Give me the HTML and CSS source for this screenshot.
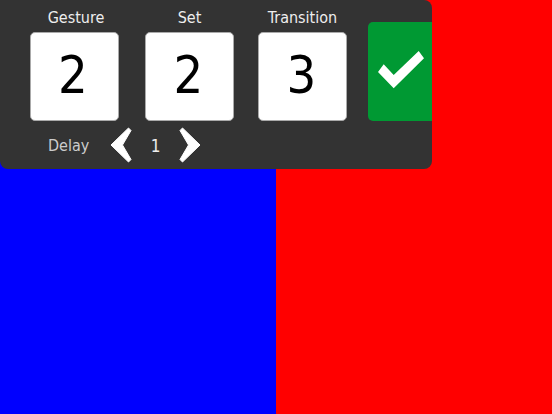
FILE: index.html
```html
<!DOCTYPE html>
<html lang="en">
<head>
<meta charset="utf-8">
<title>Gesture</title>
<link rel="stylesheet" href="styles.css">
</head>
<body>
<div class="stage">
  <div class="half blue"></div>
  <div class="half red"></div>
  <section class="panel">
    <div class="top">
      <div class="fields">
        <div class="field gesture"><span class="label">Gesture</span><div class="box">2</div></div>
        <div class="field set"><span class="label">Set</span><div class="box">2</div></div>
        <div class="field"><span class="label">Transition</span><div class="box">3</div></div>
      </div>
      <button class="ok" aria-label="Confirm">
        <svg width="46" height="38" viewBox="0 0 46 38"><path d="M0 21 L5.7 13.3 L15.7 24 L40.7 0 L46 7.3 L15.7 37.3 Z" fill="#fff"/></svg>
      </button>
    </div>
    <div class="delay">
      <span class="delay-label">Delay</span>
      <svg class="chev" width="22" height="36" viewBox="0 0 22 36"><path d="M18.5 1 L21 3.5 L12.5 18 L21 32.5 L18.5 35 L1 18 Z" fill="#fff" stroke="#fff" stroke-width="1" stroke-linejoin="round"/></svg>
      <span class="delay-value">1</span>
      <svg class="chev" width="22" height="36" viewBox="0 0 22 36"><path d="M3.5 1 L1 3.5 L9.5 18 L1 32.5 L3.5 35 L21 18 Z" fill="#fff" stroke="#fff" stroke-width="1" stroke-linejoin="round"/></svg>
    </div>
  </section>
</div>
</body>
</html>
```
FILE: styles.css
```css
html, body { margin: 0; padding: 0; }
body { font-family: "DejaVu Sans", "Noto Sans", sans-serif; font-stretch: condensed; }
.stage { position: relative; width: 552px; height: 414px; display: grid; grid-template-columns: 276px 276px; overflow: hidden; }
.blue { background: #0000ff; }
.red { background: #ff0000; }
.panel { position: absolute; top: 0; left: 0; width: 432px; height: 169px; background: #333333; border-radius: 0 8px 8px 8px; display: flex; flex-direction: column; }
.top { display: flex; align-items: flex-end; height: 121px; }
.fields { display: flex; padding-left: 30px; width: 338px; box-sizing: border-box; }
.field { display: flex; flex-direction: column; align-items: center; width: 89px; }
.gesture { margin-right: 26px; }
.gesture .label { padding-left: 3px; }
.set { margin-right: 24px; }
.label { color: #eeeeee; font-size: 16px; line-height: 20px; height: 24px; white-space: nowrap; margin-top: 8px; }
.box { width: 89px; height: 89px; box-sizing: border-box; padding-right: 2px; background: #fff; border: 1.5px solid #aaa; border-radius: 5px; color: #000; font-size: 52px; line-height: 85px; text-align: center; }
.gesture .box { padding-right: 3px; }
.ok { width: 64px; height: 99px; margin: 0 0 0 30px; padding: 0 0 4px 2px; border: 0; background: #009933; border-radius: 5px 0 0 5px; display: flex; align-items: center; justify-content: center; }
.delay { display: flex; align-items: center; height: 48px; }
.delay-label { color: #cccccc; font-size: 16px; margin-left: 48px; width: 62px; padding-top: 1px; }
.chev { display: block; }
.delay-value { color: #eeeeee; font-size: 17px; width: 47px; padding-top: 1px; text-align: center; }
```
